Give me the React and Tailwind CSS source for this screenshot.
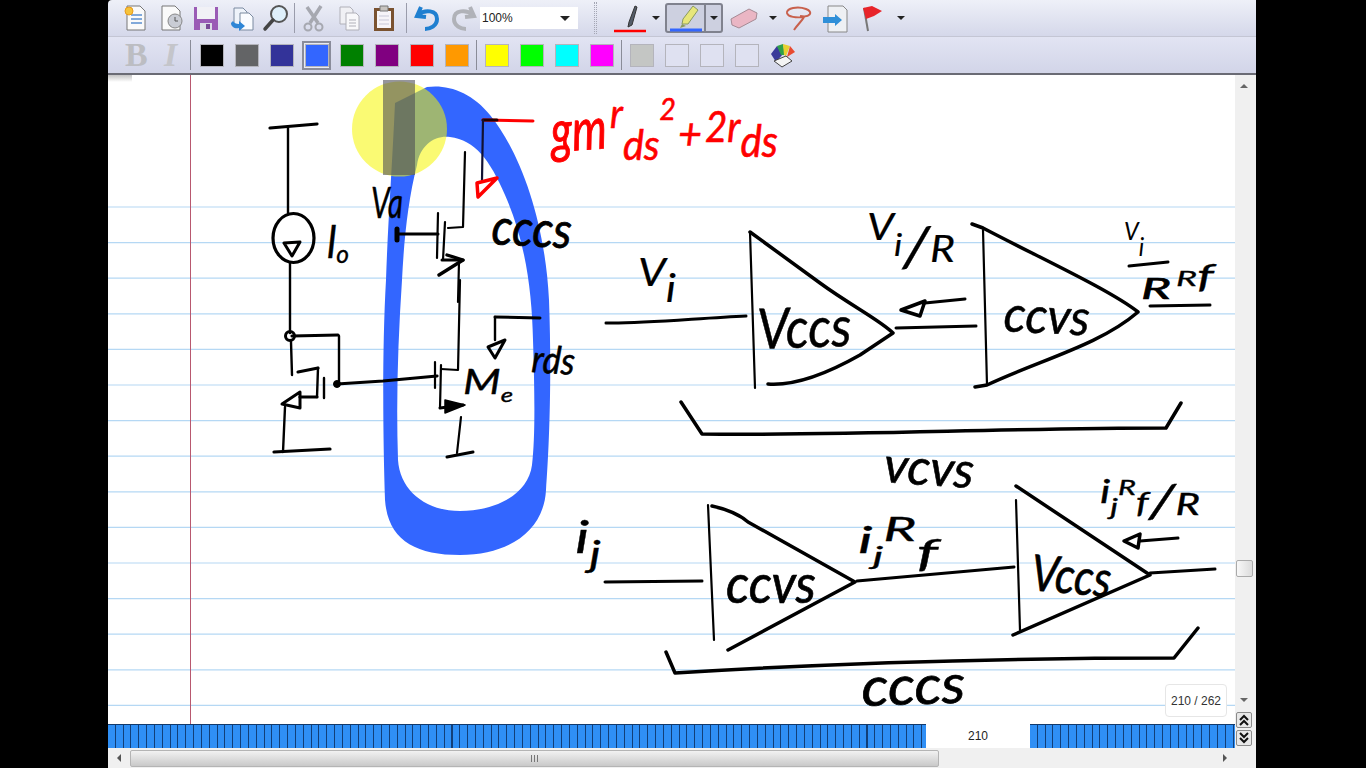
import React from 'react';

const leftColors = ['#000000', '#636466', '#333399', '#3366ff', '#008000', '#800080', '#ff0000', '#ff9900'];
const rightColors = ['#ffff00', '#00ff00', '#00ffff', '#ff00ff'];
const ruleLines = Array.from({ length: 15 }, (_, i) => 207 + i * 35.6);

const Sep = () => <div className="w-px h-[30px] bg-[#9a9cab] mx-[1px]" />;

const Btn = ({ children }) => (
    <div className="w-[35px] h-[36px] flex items-center justify-center shrink-0">
        <svg width="30" height="30" viewBox="0 0 30 30">{children}</svg>
    </div>
);

const Caret = ({ className = '' }) => (
    <div className={`w-0 h-0 border-x-[4px] border-x-transparent border-t-[4px] border-t-[#222] ${className}`} />
);

const Swatch = ({ color, selected }) => (
    <div className={`w-[29px] h-[29px] mx-[3px] flex items-center justify-center shrink-0 ${selected ? 'border-2 border-[#8a8c9a] bg-[#e8eaf4]' : ''}`}>
        <div className="w-[24px] h-[23px] border border-[#b4b4bc]" style={{ backgroundColor: color }} />
    </div>
);

const Doc = () => <path d="M6 3h13l5 5v19H6z" fill="#fafafa" stroke="#777" />;

const Ink = ({ x, y, size, len, rot = 0, color = '#000', weight = 0.6, children }) => (
    <text
        x={x}
        y={y}
        fontSize={size}
        textLength={len}
        lengthAdjust="spacingAndGlyphs"
        transform={rot ? `rotate(${rot} ${x} ${y})` : undefined}
        fill={color}
        stroke={color}
        strokeWidth={weight}
        className="italic [font-family:Lato,sans-serif]"
    >
        {children}
    </text>
);

function NotePage() {
    return (
        <svg className="absolute inset-0" width="1127" height="649" viewBox="108 75 1127 649">
            {ruleLines.map((y) => (
                <line key={y} x1="108" x2="1235" y1={y} y2={y} stroke="#b5d8f4" strokeWidth="1.2" />
            ))}
            <line x1="190.5" x2="190.5" y1="75" y2="724" stroke="#b8586f" />

            {/* blue highlighter loop */}
            <path
                fillRule="evenodd"
                fill="#3366ff"
                d="M395 103 L427 87 C447 84 472 92 490 115 C520 152 545 220 549 300 C552 380 549 450 546 490 C544 530 510 555 460 555 C415 555 388 540 385 500 C383 440 382 350 386 280 C388 220 392 170 395 103 Z
                M417 165 C420 145 435 135 450 137 C475 140 490 160 505 195 C525 240 532 290 533 340 C535 400 535 440 532 465 C528 495 495 511 460 511 C425 511 400 490 398 460 C396 400 398 340 402 280 C404 240 408 200 417 165 Z"
            />

            {/* pointer highlight */}
            <circle cx="399.5" cy="129" r="47.5" fill="#f5f500" fillOpacity="0.55" />
            <rect x="383" y="80" width="32" height="95" fill="#4a4a55" fillOpacity="0.58" />

            <g fill="none" stroke="#000" strokeLinecap="round" strokeLinejoin="round">
                {/* current source and left mirror device */}
                <g strokeWidth="2.4">
                    <path d="M288 128 L288 213" />
                    <path d="M290 263 L290 333" />
                    <path d="M291 342 L292 375" />
                    <path d="M339 336 L339 385" />
                    <path d="M318 368 L317 397" />
                    <path d="M324 378 L324 398" />
                    <path d="M285 407 L283 452" />
                    <ellipse cx="293.5" cy="238" rx="20.5" ry="24.5" strokeWidth="3.2" />
                    <path d="M284 243 L300 242 L292 256 Z" strokeWidth="3" />
                    <circle cx="290" cy="336" r="4.5" strokeWidth="3" />
                </g>
                <g strokeWidth="3.2">
                    <path d="M270 128 L317 124" />
                    <path d="M292 336 L338 335" />
                    <path d="M298 372 L318 368" />
                    <path d="M317 397 L300 397" />
                    <path d="M274 452 L330 449" />
                    <path d="M337 384 L383 381 L437 376" />
                    <path d="M282 404 L300 392 L300 408 Z" strokeWidth="3" />
                </g>
                <circle cx="337" cy="384" r="3.5" fill="#000" />

                {/* M2 */}
                <g strokeWidth="2.2">
                    <path d="M435 362 L435 388" />
                    <path d="M441 365 L440 408" />
                    <path d="M441 369 L458 370 L460 280" />
                    <path d="M461 417 L457 453" />
                </g>
                <path d="M440 408 L463 405" strokeWidth="3" />
                <path d="M447 457 L473 452" strokeWidth="3" />
                <path d="M445 400 L465 405 L445 413 Z" fill="#000" strokeWidth="1.5" />

                {/* M1 */}
                <g strokeWidth="2.2">
                    <path d="M438 213 L437 258" />
                    <path d="M445 222 L443 260" />
                    <path d="M448 228 L463 227 L465 152" />
                    <path d="M459 262 L458 302" />
                </g>
                <path d="M397 234 L438 234" strokeWidth="3" />
                <path d="M397 229 L397 240" strokeWidth="5" />
                <path d="M442 260 L463 260" strokeWidth="3" />
                <path d="M439 275 L463 260 L447 255" strokeWidth="3.4" />

                {/* resistance arrows */}
                <path d="M483 120 L533 121" stroke="#ff0000" strokeWidth="3" />
                <path d="M483 120 L497 120" stroke="#220000" strokeWidth="3" />
                <path d="M483 120 L482 180" stroke="#111133" strokeWidth="2.2" />
                <path d="M477 183 L497 178 L478 197 Z" stroke="#ff0000" strokeWidth="3.5" />
                <path d="M495 317 L540 318" strokeWidth="3" />
                <path d="M495 317 L495 340" strokeWidth="2.4" />
                <path d="M488 347 L505 340 L495 358 Z" strokeWidth="3" />

                {/* first amplifier pair */}
                <path d="M750 232 L755 388" strokeWidth="2.2" />
                <path d="M750 232 L820 283 C850 305 880 320 893 333 L860 355 C830 372 795 386 768 384" strokeWidth="3.5" />
                <path d="M606 323 C640 324 700 318 746 316" strokeWidth="3" />
                <path d="M896 328 L976 326" strokeWidth="3" />
                <path d="M965 299 L925 303" strokeWidth="3" />
                <path d="M901 310 L925 301 L920 316 Z" strokeWidth="3.5" />
                <path d="M983 230 L987 385" strokeWidth="2.2" />
                <path d="M972 224 L983 228 C1040 258 1110 290 1138 312 C1100 345 1040 360 987 385 L975 387" strokeWidth="3.5" />
                <path d="M1150 306 L1210 305" strokeWidth="3" />
                <path d="M1129 266 L1168 262" strokeWidth="3" />
                <path d="M681 402 L702 434 C850 436 1000 428 1166 428 L1181 403" strokeWidth="3.5" />

                {/* second amplifier pair */}
                <path d="M708 505 L714 640" strokeWidth="2.2" />
                <path d="M712 506 C730 510 740 515 748 522 L855 582 L728 650" strokeWidth="3.5" />
                <path d="M605 582 L702 581" strokeWidth="3" />
                <path d="M857 581 L1014 567" strokeWidth="3" />
                <path d="M1016 500 L1020 630" strokeWidth="2.2" />
                <path d="M1016 486 L1150 575 L1013 635" strokeWidth="3.5" />
                <path d="M1150 573 L1215 569" strokeWidth="3" />
                <path d="M1178 538 L1140 541" strokeWidth="3" />
                <path d="M1124 541 L1140 534 L1138 548 Z" strokeWidth="3.5" />
                <path d="M666 652 L675 673 C850 662 1000 658 1174 658 L1198 628" strokeWidth="3.5" />
            </g>

            {/* handwriting */}
            <Ink x={552} y={152} size={58} len={56} color="#ff0000" rot={-4} weight={1}>gm</Ink>
            <Ink x={610} y={128} size={40} len={66} color="#ff0000">r<tspan dy={32} fontSize={42}>ds</tspan><tspan dy={-40} fontSize={30}>2</tspan></Ink>
            <Ink x={678} y={150} size={44} len={24} color="#ff0000">+</Ink>
            <Ink x={705} y={142} size={42} len={73} color="#ff0000">2r<tspan dy={15} fontSize={44}>ds</tspan></Ink>

            <Ink x={491} y={244} size={50} len={80} rot={3} weight={0.8}>cccs</Ink>
            <Ink x={371} y={218} size={42} len={32} weight={0.4}>Va</Ink>
            <Ink x={327} y={258} size={44} len={22} weight={0.4}>l<tspan dy={5} fontSize={26}>o</tspan></Ink>
            <Ink x={463} y={394} size={34} len={50} weight={0.4}>M<tspan dy={8} fontSize={20}>e</tspan></Ink>
            <Ink x={531} y={372} size={38} len={43} rot={4}>rds</Ink>

            <Ink x={638} y={302} size={38} len={38} weight={0.2}><tspan dy={-16}>V</tspan><tspan dy={16}>i</tspan></Ink>
            <Ink x={758} y={349} size={56} len={94} rot={-2} weight={0.5}>Vccs</Ink>
            <Ink x={1003} y={331} size={50} len={86} rot={3} weight={0.5}>ccvs</Ink>
            <Ink x={867} y={240} size={36} len={88} weight={0.2}>V<tspan dy={16} fontSize={30}>i</tspan><tspan dy={10} fontSize={56}>/</tspan><tspan dy={-4} fontSize={36}>R</tspan></Ink>
            <Ink x={1124} y={240} size={26} len={20} weight={0.1}>V<tspan dy={16}>i</tspan></Ink>
            <Ink x={1141} y={299} size={28} len={30} weight={0.6}>R</Ink>
            <Ink x={1176} y={286} size={22} len={38} weight={0.3}>R<tspan dy={2} fontSize={32}>f</tspan></Ink>
            <Ink x={883} y={482} size={50} len={90} rot={4} weight={0.6}>vcvs</Ink>

            <Ink x={575} y={553} size={44} len={26} weight={0.3}>i<tspan dy={14} fontSize={36}>j</tspan></Ink>
            <Ink x={726} y={603} size={54} len={90} weight={0.7}>ccvs</Ink>
            <Ink x={858} y={553} size={36} len={80} weight={0.3}>i<tspan dy={12} fontSize={26}>j</tspan><tspan dy={-24} fontSize={32}>R</tspan><tspan dy={26} fontSize={38}>f</tspan></Ink>
            <Ink x={1030} y={590} size={50} len={80} rot={5} weight={0.7}>Vccs</Ink>
            <Ink x={1100} y={503} size={32} len={100} weight={0.4}>i<tspan dy={12} fontSize={24}>j</tspan><tspan dy={-20} fontSize={22}>R</tspan><tspan dy={18} fontSize={28}>f</tspan><tspan dy={4} fontSize={46}>/</tspan><tspan dy={-2} fontSize={30}>R</tspan></Ink>
            <Ink x={862} y={706} size={54} len={104} rot={-2} weight={0.7}>cccs</Ink>
        </svg>
    );
}

export default function App() {
    return (
        <div className="w-[1366px] h-[768px] bg-black pl-[108px] overflow-hidden [font-family:'Liberation_Sans',sans-serif]">
            <div className="w-[1148px] h-full flex flex-col">
                {/* top toolbar */}
                <div className="h-[37px] shrink-0 flex items-center pl-[10px] bg-gradient-to-b from-[#eef0f8] to-[#d5d8ea] border-b border-[#c4c6d4] rounded-tl-sm">
                    <Btn>
                        <Doc />
                        <path d="M10 12h11M10 16h11M10 20h11" stroke="#5a8fd0" strokeWidth="1.5" />
                        <circle cx="8" cy="8" r="4" fill="#f5c33b" stroke="#e89a1c" />
                    </Btn>
                    <Btn>
                        <Doc />
                        <circle cx="19" cy="18" r="7" fill="#c9ccd4" stroke="#888" />
                        <path d="M19 14v4h3" stroke="#555" fill="none" />
                    </Btn>
                    <Btn>
                        <path d="M3 4h24v23H3z" fill="#9a5bb5" />
                        <path d="M6 4h18v12H6z" fill="#f1f1f6" />
                        <path d="M9 20h12v7H9z" fill="#dcdce6" />
                        <path d="M15 21h4v5h-4z" fill="#7a4a96" />
                    </Btn>
                    <Btn>
                        <path d="M8 5h9l4 4v13H8z" fill="#eef3fa" stroke="#7a8aa0" />
                        <path d="M14 10h9l4 4v13H14z" fill="#fafcff" stroke="#7a8aa0" />
                        <path d="M5 20c0 4 4 6 8 5v3l6-5-6-5v3c-3 0-5-1-6-3z" fill="#2f86d6" />
                    </Btn>
                    <Btn>
                        <circle cx="18" cy="11" r="8" fill="#dff0fb" stroke="#555" strokeWidth="2" />
                        <path d="M12 17 L4 26" stroke="#444" strokeWidth="3.5" strokeLinecap="round" />
                    </Btn>
                    <Sep />
                    <Btn>
                        <path d="M22 3 L11 20 M8 4 L19 20" stroke="#a6a8b0" strokeWidth="3.5" />
                        <circle cx="9" cy="24" r="3.5" fill="none" stroke="#a6a8b0" strokeWidth="2" />
                        <circle cx="20" cy="24" r="3.5" fill="none" stroke="#a6a8b0" strokeWidth="2" />
                    </Btn>
                    <Btn>
                        <path d="M6 4h10l3 3v14H6z" fill="#f0f0f4" stroke="#b0b0b8" />
                        <path d="M12 10h10l3 3v14H12z" fill="#f8f8fa" stroke="#b0b0b8" />
                        <path d="M15 17h7M15 20h7M15 23h7" stroke="#b0b0b8" />
                    </Btn>
                    <Btn>
                        <path d="M5 5h20v23H5z" fill="#7a5230" />
                        <path d="M8 8h14v17H8z" fill="#f6f4f8" />
                        <path d="M11 3h8v5h-8z" fill="#c8c4c0" stroke="#777" />
                        <path d="M10 13h10M10 17h10M10 21h10" stroke="#c8c8d8" />
                    </Btn>
                    <div className="w-[4px]" />
                    <Sep />
                    <div className="w-[2px]" />
                    <Btn>
                        <path d="M8 4 L4 13 L13 14 M5 12 C12 6 24 7 24 16 C24 23 17 26 12 26" fill="none" stroke="#1f7fd0" strokeWidth="4" />
                    </Btn>
                    <Btn>
                        <path d="M22 4 L26 13 L17 14 M25 12 C18 6 6 7 6 16 C6 23 13 26 18 26" fill="none" stroke="#b0b2b8" strokeWidth="4" />
                    </Btn>
                    <div className="w-[98px] h-[22px] bg-white flex items-center justify-between pl-[2px] pr-[8px] text-[12px] text-[#222]">
                        <span>100%</span>
                        <Caret className="border-x-[5px] border-t-[5px]" />
                    </div>
                    <div className="w-[3px] h-[32px] ml-[16px] border-x border-dotted border-[#a4a6b4]" />
                    <div className="w-[48px] ml-[9px] h-[36px] flex items-center justify-center shrink-0">
                        <svg width="36" height="30" viewBox="0 0 36 30">
                            <path d="M25 4 L20 22 L16 24 L17 19 L23 3 Z" fill="#555d6a" stroke="#333" />
                            <path d="M2 28h32" stroke="#ff0000" strokeWidth="2.5" />
                        </svg>
                    </div>
                    <Caret className="ml-[-2px] mr-[5px]" />
                    <div className="w-[58px] h-[30px] flex border-2 border-[#80828e] rounded-[3px] bg-[#cdd0e0]">
                        <div className="w-[39px] flex items-center justify-center border-r-2 border-[#80828e]">
                            <svg width="36" height="28" viewBox="0 0 36 28">
                                <path d="M25 2 L30 6 L20 20 L14 20 L15 15 Z" fill="#e7e67a" stroke="#8a9a60" />
                                <path d="M14 20 L12 24 L18 22" fill="#8a9a60" />
                                <path d="M2 26h32" stroke="#3366ff" strokeWidth="3" />
                            </svg>
                        </div>
                        <div className="flex-1 flex items-center justify-center">
                            <Caret />
                        </div>
                    </div>
                    <div className="w-[30px] ml-[6px] h-[36px] flex items-center justify-center shrink-0">
                        <svg width="30" height="26" viewBox="0 0 30 26">
                            <path d="M2 14 L20 4 L28 8 L27 14 L10 23 L3 20 Z" fill="#eab6c4" stroke="#a58a94" />
                        </svg>
                    </div>
                    <Caret className="ml-[10px] mr-[7px]" />
                    <div className="w-[30px] h-[36px] flex items-center justify-center shrink-0">
                        <svg width="30" height="28" viewBox="0 0 30 28">
                            <path d="M16 12 C26 14 30 8 22 5 C14 2 2 4 3 9 C4 13 12 14 20 13 C18 17 14 20 10 26" fill="none" stroke="#c8604c" strokeWidth="2" />
                        </svg>
                    </div>
                    <div className="ml-[4px]">
                        <Btn>
                            <path d="M7 3h15l4 4v22H7z" fill="#eef0f4" stroke="#888" />
                            <path d="M2 14h12v-3l7 6-7 6v-3H2z" fill="#2f8fd8" />
                        </Btn>
                    </div>
                    <div className="w-[34px] ml-[2px] h-[36px] flex items-center justify-center shrink-0">
                        <svg width="28" height="30" viewBox="0 0 28 30">
                            <path d="M6 5 L10 28" stroke="#777" strokeWidth="2" />
                            <path d="M5 5 L14 3 L24 8 L16 13 L8 16 Z" fill="#e8242a" />
                        </svg>
                    </div>
                    <Caret className="ml-[8px]" />
                </div>

                {/* colour toolbar */}
                <div className="h-[38px] shrink-0 flex items-center pl-[17px] bg-gradient-to-b from-[#e2e4f3] to-[#d2d5e8] border-b-2 border-[#6a6b74]">
                    <span className="w-[30px] text-[34px] leading-none font-bold text-[#bcbdc2] [font-family:'Liberation_Serif',serif]">B</span>
                    <span className="w-[29px] pl-[9px] text-[34px] leading-none font-bold italic text-[#c4c5ca] [font-family:'Liberation_Serif',serif]">I</span>
                    <div className="w-px h-[30px] bg-[#8a8c98] ml-[6px] mr-[3px]" />
                    {leftColors.map((c) => (
                        <Swatch key={c} color={c} selected={c === '#3366ff'} />
                    ))}
                    <div className="w-px h-[30px] bg-[#8a8c98] mx-[2px]" />
                    {rightColors.map((c) => (
                        <Swatch key={c} color={c} />
                    ))}
                    <div className="w-px h-[30px] bg-[#8a8c98] mx-[2px]" />
                    <Swatch color="#c4c6c4" />
                    <Swatch color="#dfe1f1" />
                    <Swatch color="#dfe1f1" />
                    <Swatch color="#dfe1f1" />
                    <svg className="ml-[4px]" width="30" height="26" viewBox="0 0 30 26">
                        <path d="M3 12 L9 4 L15 12 L8 20 Z" fill="#3a3a9a" />
                        <path d="M9 4 L15 2 L17 13 L13 13 Z" fill="#2fa04a" />
                        <path d="M15 2 L22 4 L18 14 L16 13 Z" fill="#e8d030" />
                        <path d="M22 4 L27 10 L19 15 Z" fill="#e84a30" />
                        <path d="M6 19 L18 14 L24 19 L14 25 Z" fill="#f4f4f4" stroke="#444" />
                    </svg>
                </div>

                <div className="flex-1 flex min-h-0">
                    <div className="w-[1127px] flex flex-col">
                        {/* page */}
                        <div className="relative h-[649px] bg-white">
                            <NotePage />
                            <div className="absolute left-0 top-0 w-[24px] h-[7px] bg-gradient-to-b from-[#c4c4c4] to-transparent" />
                            <div className="absolute left-[1057px] top-[609px] w-[62px] h-[33px] bg-white border border-[#e6e6e6] rounded-[4px] flex items-center justify-center text-[12px] text-[#333]">
                                210 / 262
                            </div>
                        </div>

                        {/* page strip */}
                        <div className="h-[24px] flex bg-white">
                            <div className="w-[818px] border-t border-[#123a6c] bg-[repeating-linear-gradient(90deg,#2f8ff5_0,#2f8ff5_6.8px,#123f78_6.8px,#123f78_7.83px)]" />
                            <div className="w-[104px] flex items-center justify-center text-[12px] text-[#222]">210</div>
                            <div className="w-[205px] border-t border-[#123a6c] bg-[repeating-linear-gradient(90deg,#2f8ff5_0,#2f8ff5_6.8px,#123f78_6.8px,#123f78_7.83px)]" />
                        </div>

                        {/* horizontal scroll */}
                        <div className="h-[20px] flex items-center bg-[#f0f0f0]">
                            <div className="w-[22px] flex justify-center">
                                <div className="w-0 h-0 border-y-[4px] border-y-transparent border-r-[4px] border-r-[#555]" />
                            </div>
                            <div className="w-[809px] h-[17px] rounded-[2px] border border-[#b4b4b4] bg-gradient-to-b from-[#f2f2f2] to-[#c9c9c9] flex items-center justify-center">
                                <div className="w-[7px] h-[7px] border-x border-[#777] flex justify-center">
                                    <div className="w-px h-full bg-[#777]" />
                                </div>
                            </div>
                            <div className="flex-1 flex justify-end pr-[8px]">
                                <div className="w-0 h-0 border-y-[4px] border-y-transparent border-l-[4px] border-l-[#555]" />
                            </div>
                        </div>
                    </div>

                    {/* vertical scroll */}
                    <div className="w-[21px] flex flex-col bg-[#f0f0f0] pl-[1px]">
                        <div className="h-[20px] flex items-center justify-center pr-[4px] mt-[1px]">
                            <div className="w-0 h-0 border-x-[4px] border-x-transparent border-b-[4px] border-b-[#666]" />
                        </div>
                        <div className="w-[17px] h-[17px] mt-[464px] border border-[#aaa] rounded-[2px] bg-gradient-to-r from-[#f8f8f8] to-[#dcdcdc]" />
                        <div className="h-[20px] mt-[113px] flex items-center justify-center pr-[4px]">
                            <div className="w-0 h-0 border-x-[4px] border-x-transparent border-t-[4px] border-t-[#666]" />
                        </div>
                        <div className="w-[16px] h-[16px] mt-[2px] border border-[#8a8a8a] rounded-[2px] bg-[#e8e8e8] flex items-center justify-center">
                            <svg width="12" height="12" viewBox="0 0 12 12" fill="none" stroke="#111" strokeWidth="2">
                                <path d="M2 6 L6 2 L10 6 M2 11 L6 7 L10 11" />
                            </svg>
                        </div>
                        <div className="w-[16px] h-[16px] mt-[2px] border border-[#8a8a8a] rounded-[2px] bg-[#e8e8e8] flex items-center justify-center">
                            <svg width="12" height="12" viewBox="0 0 12 12" fill="none" stroke="#111" strokeWidth="2">
                                <path d="M2 1 L6 5 L10 1 M2 6 L6 10 L10 6" />
                            </svg>
                        </div>
                    </div>
                </div>
            </div>
        </div>
    );
}
